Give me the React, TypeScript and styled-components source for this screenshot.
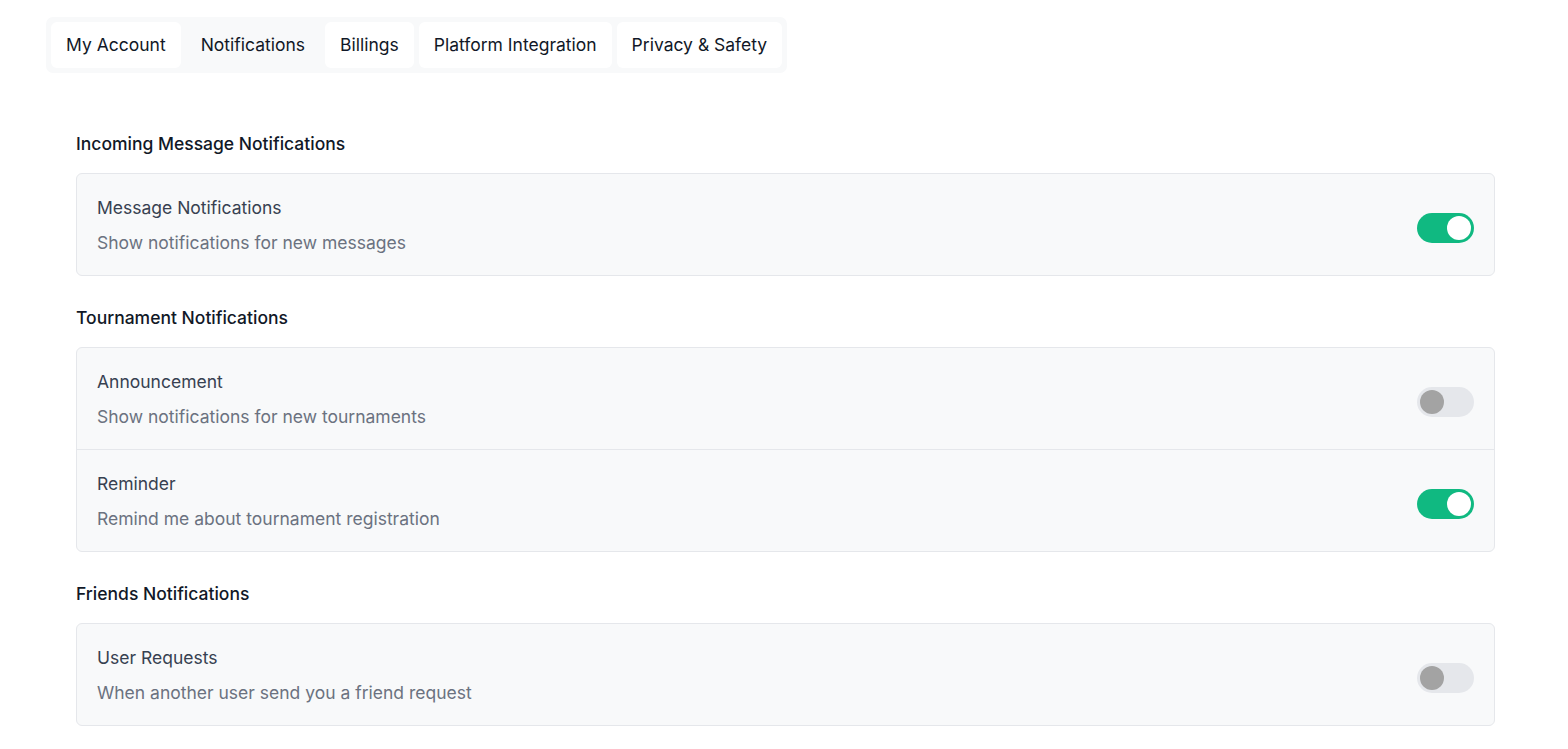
import React, { useState } from "react";
import styled, { createGlobalStyle } from "styled-components";

const GlobalStyle = createGlobalStyle`
  * { box-sizing: border-box; }
  body {
    margin: 0;
    background: #ffffff;
    font-family: Inter, "Noto Sans", sans-serif;
    color: #111827;
  }
`;

const Page = styled.div`
  padding: 17px 73px 40px 46px;
`;

const TabBar = styled.div`
  display: inline-flex;
  gap: 5px;
  padding: 5px;
  background: #f8f9fa;
  border-radius: 7px;
`;

const Tab = styled.button<{ $active?: boolean }>`
  font-family: Inter, "Noto Sans", sans-serif;
  font-size: 17.5px;
  line-height: 24px;
  color: #111827;
  padding: 11px 15px;
  border: none;
  border-radius: 6px;
  background: ${(p) => (p.$active ? "transparent" : "#ffffff")};
  cursor: pointer;
`;

const Content = styled.div`
  padding: 58px 0 0 30px;
  display: flex;
  flex-direction: column;
`;

const Section = styled.section`
  display: flex;
  flex-direction: column;
  gap: 17px;
  margin-bottom: 29px;
`;

const SectionTitle = styled.h3`
  margin: 0;
  font-size: 17.5px;
  line-height: 25px;
  font-weight: 500;
  color: #111827;
`;

const Card = styled.div`
  background: #f8f9fa;
  border: 1px solid #e5e7eb;
  border-radius: 6px;
  overflow: hidden;
`;

const Row = styled.div`
  display: flex;
  align-items: center;
  justify-content: space-between;
  padding: 21px 20px 20px 20px;
  & + & {
    border-top: 1px solid #e5e7eb;
  }
`;

const RowText = styled.div`
  display: flex;
  flex-direction: column;
  gap: 10px;
`;

const RowTitle = styled.div`
  font-size: 17.5px;
  line-height: 25px;
  color: #374151;
`;

const RowDesc = styled.div`
  font-size: 17.5px;
  line-height: 25px;
  color: #6b7280;
`;

const Switch = styled.button<{ $on: boolean }>`
  position: relative;
  width: 57px;
  height: 30px;
  margin-top: 5px;
  border: none;
  padding: 0;
  border-radius: 15px;
  background: ${(p) => (p.$on ? "#10b981" : "#e5e7eb")};
  cursor: pointer;
  flex-shrink: 0;
  &::after {
    content: "";
    position: absolute;
    top: 3px;
    left: ${(p) => (p.$on ? "30px" : "3px")};
    width: 24px;
    height: 24px;
    border-radius: 50%;
    background: ${(p) => (p.$on ? "#ffffff" : "#a3a3a3")};
  }
`;

type Item = { title: string; desc: string; on: boolean };
type Group = { title: string; items: Item[] };

const groups: Group[] = [
  {
    title: "Incoming Message Notifications",
    items: [{ title: "Message Notifications", desc: "Show notifications for new messages", on: true }],
  },
  {
    title: "Tournament Notifications",
    items: [
      { title: "Announcement", desc: "Show notifications for new tournaments", on: false },
      { title: "Reminder", desc: "Remind me about tournament registration", on: true },
    ],
  },
  {
    title: "Friends Notifications",
    items: [{ title: "User Requests", desc: "When another user send you a friend request", on: false }],
  },
];

const tabs = ["My Account", "Notifications", "Billings", "Platform Integration", "Privacy & Safety"];

export default function App() {
  const [state, setState] = useState(groups.map((g) => g.items.map((i) => i.on)));
  const toggle = (gi: number, ii: number) =>
    setState((s) => s.map((g, a) => g.map((v, b) => (a === gi && b === ii ? !v : v))));

  return (
    <>
      <GlobalStyle />
      <Page>
        <TabBar>
          {tabs.map((t) => (
            <Tab key={t} $active={t === "Notifications"}>
              {t}
            </Tab>
          ))}
        </TabBar>
        <Content>
          {groups.map((g, gi) => (
            <Section key={g.title}>
              <SectionTitle>{g.title}</SectionTitle>
              <Card>
                {g.items.map((it, ii) => (
                  <Row key={it.title}>
                    <RowText>
                      <RowTitle>{it.title}</RowTitle>
                      <RowDesc>{it.desc}</RowDesc>
                    </RowText>
                    <Switch $on={state[gi][ii]} onClick={() => toggle(gi, ii)} aria-label={it.title} />
                  </Row>
                ))}
              </Card>
            </Section>
          ))}
        </Content>
      </Page>
    </>
  );
}
